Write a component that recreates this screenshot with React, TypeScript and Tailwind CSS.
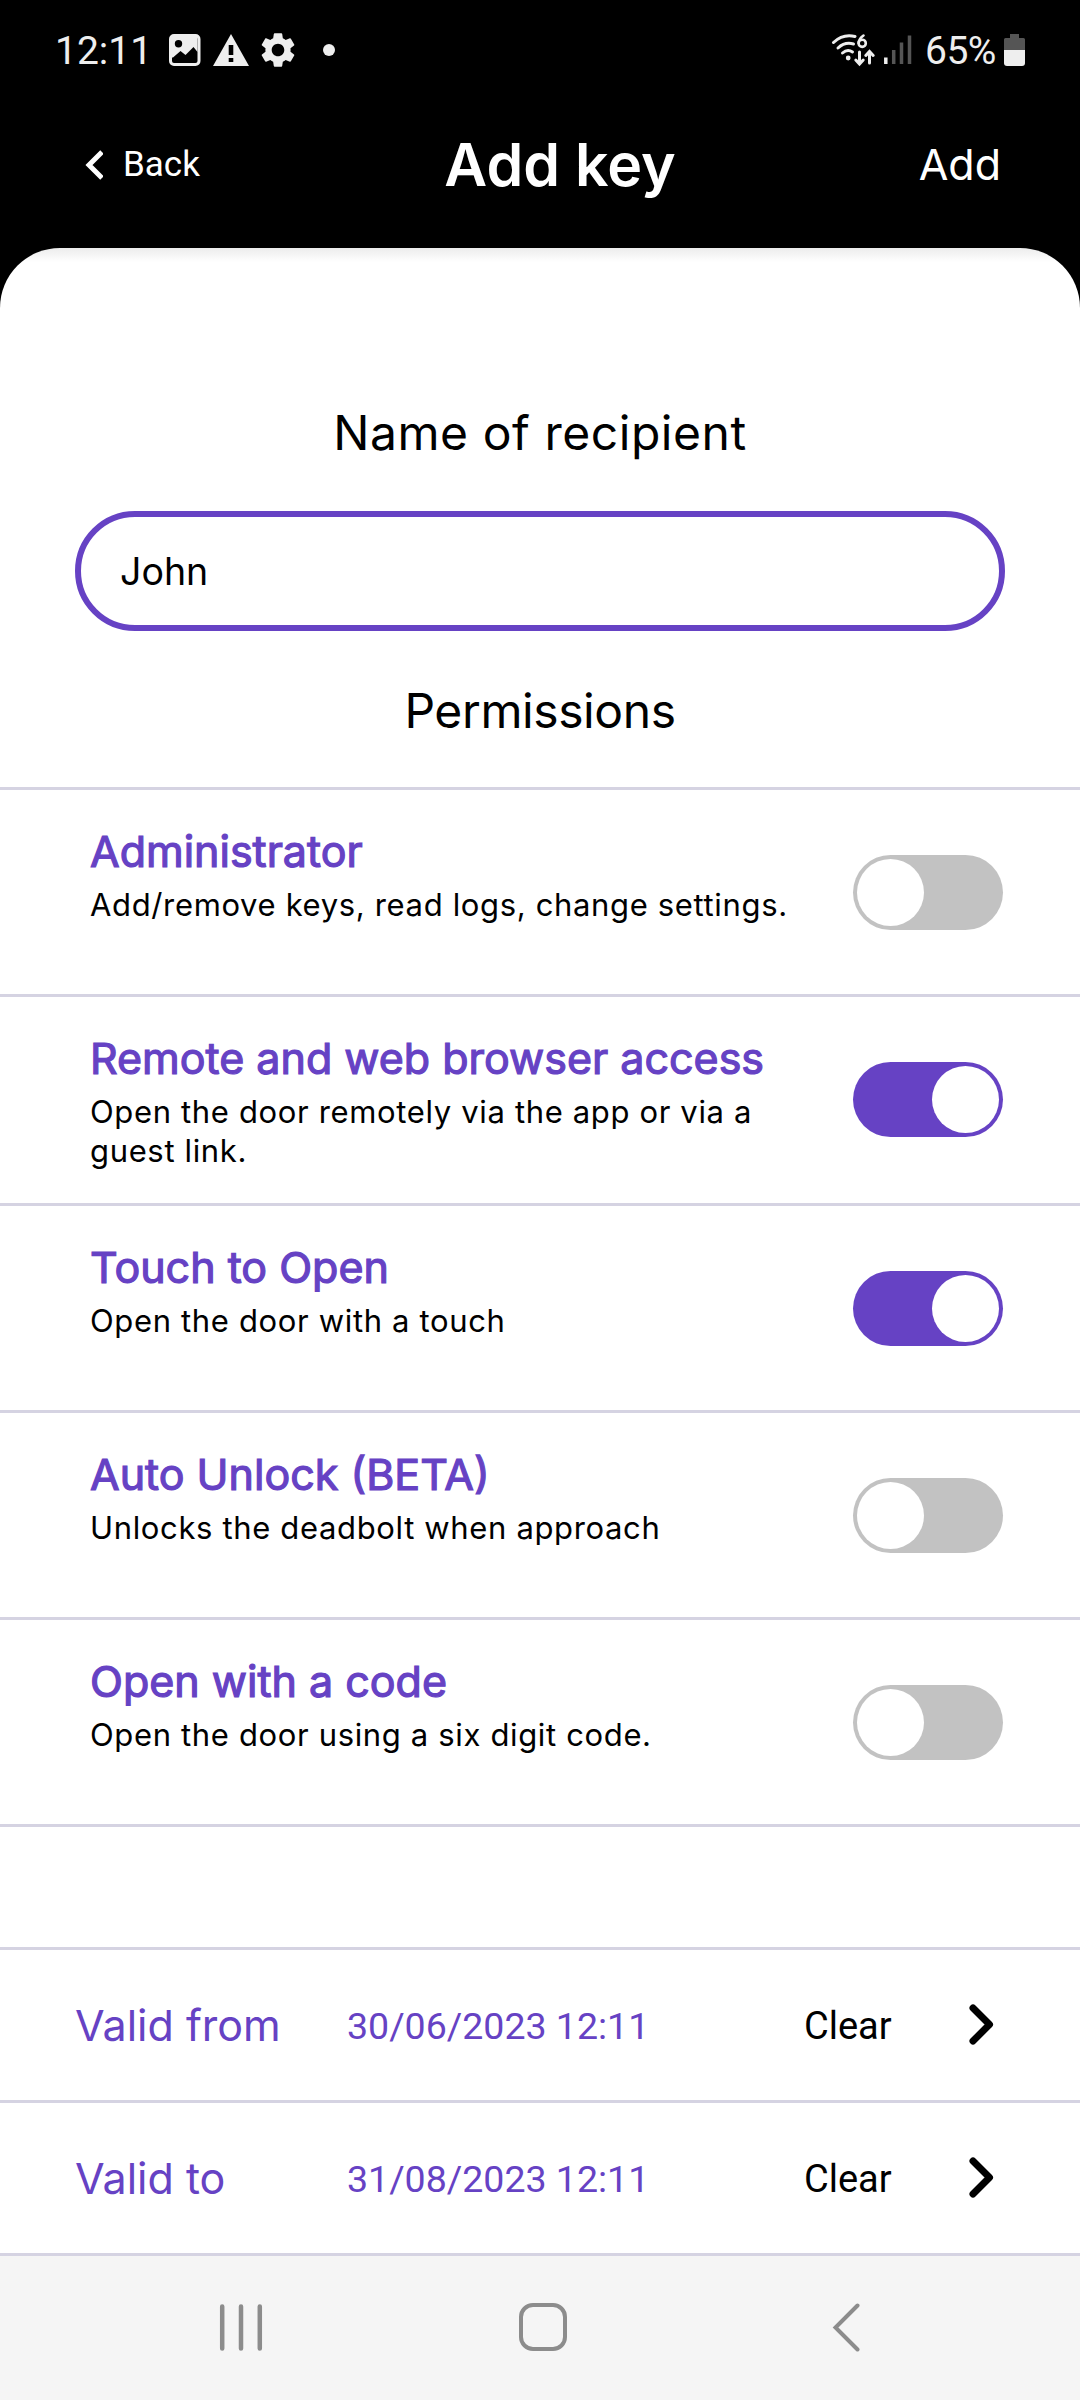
import React from 'react';

const inter = "font-['Inter',sans-serif]";
const roboto = "font-['Roboto',sans-serif]";

const permissions = [
  { title: 'Administrator', desc: 'Add/remove keys, read logs, change settings.', on: false, height: 'h-[207px]' },
  { title: 'Remote and web browser access', desc: 'Open the door remotely via the app or via a guest link.', on: true, height: 'h-[209px]' },
  { title: 'Touch to Open', desc: 'Open the door with a touch', on: true, height: 'h-[207px]' },
  { title: 'Auto Unlock (BETA)', desc: 'Unlocks the deadbolt when approach', on: false, height: 'h-[207px]' },
  { title: 'Open with a code', desc: 'Open the door using a six digit code.', on: false, height: 'h-[207px]' },
];

const validity = [
  { label: 'Valid from', value: '30/06/2023 12:11' },
  { label: 'Valid to', value: '31/08/2023 12:11' },
];

const StatusBar: React.FC = () => (
  <div className={`flex h-[100px] items-center justify-between pl-[55px] pr-[55px] text-[#eeeeee] ${roboto}`}>
    <div className="flex items-center">
      <span className="w-[114px] pt-[2px] text-[39px] leading-none">12:11</span>
      <svg width="32" height="32" viewBox="0 0 32 32" fill="none">
        <rect x="1.5" y="1.5" width="28.5" height="29" rx="3.5" stroke="currentColor" strokeWidth="3" />
        <path
          fillRule="evenodd"
          fill="currentColor"
          d="M3 1h25.500v17l-4-5-8 8-5-4-7.500 6.500H2V2zM9.500 6a3.700 3.700 0 1 0 0 7.400 3.700 3.700 0 0 0 0-7.400z"
        />
      </svg>
      <svg className="ml-[12px]" width="36" height="32" viewBox="0 0 36 32">
        <path fillRule="evenodd" fill="currentColor" d="M18 0L36 32H0zM15.700 11v10h4.600v-10zM15.700 24v4h4.600v-4z" />
      </svg>
      <svg className="ml-[8px]" width="42" height="42" viewBox="0 0 24 24" fill="currentColor">
        <path d="M19.140 12.940c.04-.3.060-.61.060-.94s-.02-.64-.07-.94l2.030-1.580a.49.49 0 0 0 .12-.61l-1.920-3.320a.488.488 0 0 0-.59-.22l-2.390.96c-.5-.38-1.030-.7-1.620-.94l-.36-2.540a.484.484 0 0 0-.48-.41h-3.840c-.24 0-.43.17-.47.41l-.36 2.540c-.59.24-1.130.57-1.620.94l-2.390-.96c-.22-.08-.47 0-.59.22L2.740 8.870c-.12.21-.08.47.12.61l2.030 1.580c-.05.3-.09.63-.09.94s.02.640.07.940l-2.030 1.580a.49.49 0 0 0-.12.610l1.920 3.320c.12.220.370.290.590.220l2.390-.96c.5.380 1.030.700 1.620.940l.36 2.540c.05.240.240.410.480.410h3.840c.24 0 .44-.17.470-.41l.36-2.540c.59-.24 1.130-.56 1.620-.94l2.390.96c.22.080.470 0 .590-.22l1.920-3.320c.12-.22.070-.47-.12-.61l-2.010-1.580zM12 15.600c-1.980 0-3.600-1.620-3.600-3.600s1.620-3.600 3.600-3.600 3.600 1.620 3.600 3.600-1.620 3.600-3.600 3.600z" />
      </svg>
      <span className="ml-[24px] size-3 rounded-full bg-[#eeeeee]" />
    </div>

    <div className="flex items-center">
      <svg width="82" height="34" viewBox="0 0 82 34" fill="none" stroke="currentColor" strokeLinecap="round">
        <g strokeWidth="3">
          <path d="M2.500 9.500Q12 .5 24 3.500" />
          <path d="M7 15Q14 8.500 22.500 11" />
          <path d="M11.500 20Q16.500 15.500 21.500 19" />
          <path d="M28.500 19v11M24.800 27l3.700 4 3.700-4M38.500 30v-11M34.800 22.500l3.700-4 3.700 4" />
        </g>
        <g strokeWidth="2.600">
          <circle cx="31.200" cy="10.300" r="3.600" />
          <path d="M32.500 2.500Q28 5.500 27.600 10" />
        </g>
        <circle cx="17.200" cy="25" r="2.400" fill="currentColor" stroke="none" />
        <g strokeWidth="3.500" strokeLinecap="butt">
          <path d="M54.800 24.500v6.500" />
          <path stroke="#555555" d="M62.700 17v14M70.500 9.500v21.500M78.500 2.500v28.500" />
        </g>
      </svg>
      <span className="ml-[12px] w-[79px] pt-[2px] text-[39px] leading-none tracking-[-0.5px]">65%</span>
      <svg width="21" height="32" viewBox="0 0 21 32">
        <path fill="#555555" d="M6 0h9v4h4.500a1.500 1.500 0 0 1 1.500 1.500V16H0V5.500A1.500 1.500 0 0 1 1.500 4H6z" />
        <path fill="currentColor" d="M0 16h21v13a3 3 0 0 1-3 3H3a3 3 0 0 1-3-3z" />
      </svg>
    </div>
  </div>
);

const Header: React.FC = () => (
  <header className="flex h-[148px] items-start justify-between pl-[85px] pr-[79px] text-white">
    <button className="flex w-[200px] items-center gap-[20px] pt-[44px]">
      <svg width="18" height="30" viewBox="0 0 18 30" fill="none" stroke="currentColor" strokeWidth="5">
        <path d="M17 2L4 15l13 13" />
      </svg>
      <span className={`pt-px text-[35px] leading-[40px] ${roboto}`}>Back</span>
    </button>
    <h1 className={`pt-[30px] pl-[34px] text-[59px] leading-[70px] font-semibold whitespace-nowrap ${inter}`}>Add key</h1>
    <button className={`w-[200px] pt-[38px] text-right text-[43px] leading-[52px] ${inter}`}>Add</button>
  </header>
);

const Toggle: React.FC<{ on: boolean }> = ({ on }) => (
  <div
    role="switch"
    aria-checked={on}
    className={`flex h-[75px] w-[150px] shrink-0 items-center rounded-full px-1 ${on ? 'justify-end bg-[#6642c4]' : 'justify-start bg-[#c2c2c2]'}`}
  >
    <div className="size-[67px] rounded-full bg-white" />
  </div>
);

const NavBar: React.FC = () => (
  <nav className="flex h-[144px] items-start justify-between bg-[#f5f5f5] pt-[46px] pr-[219px] pl-[219px] text-[#8c8c8c]">
    <svg width="44" height="50" viewBox="0 0 44 50" stroke="currentColor" strokeWidth="4.500" strokeLinecap="round">
      <path d="M3.200 4.500v42M22 4.500v42M40.800 4.500v42" />
    </svg>
    <div className="mt-px mr-[8px] size-[48px] rounded-[14px] border-4 border-[#8c8c8c]" />
    <svg width="30" height="50" viewBox="0 0 30 50" fill="none" stroke="currentColor" strokeWidth="4" strokeLinecap="round">
      <path d="M26.500 3.500L4.500 25.500l22 22" />
    </svg>
  </nav>
);

const App: React.FC = () => {
  return (
    <div className="h-[2400px] w-[1080px] overflow-hidden bg-black">
      <StatusBar />
      <Header />

      <main className={`h-[2008px] rounded-t-[60px] bg-white bg-linear-to-b from-[#ececec] to-white bg-[length:100%_14px] bg-no-repeat text-black ${inter}`}>
        <div className="flex h-[539px] flex-col items-center pt-[155px]">
          <label className="text-[48px] leading-[60px] tracking-[0.55px]">Name of recipient</label>
          <div className="mt-[48px] flex h-[120px] w-[930px] items-center rounded-full border-[6px] border-[#6642c4] pt-[2px] pl-[39px] text-[37.500px]">
            John
          </div>
          <h2 className="mt-[50px] text-[48px] leading-[60px] tracking-[-0.4px]">Permissions</h2>
        </div>

        {permissions.map((item) => (
          <section key={item.title} className={`flex items-start justify-between border-t-3 border-[#d5d3e2] pr-[77px] pl-[90px] ${item.height}`}>
            <div className="w-[720px] pt-[35px]">
              <h3 className="text-[43px] leading-[52px] text-[#6642c4] [-webkit-text-stroke:1.2px_#6642c4]">{item.title}</h3>
              <p className="pt-[8px] text-[31px] leading-[39px] tracking-[0.65px]">{item.desc}</p>
            </div>
            <div className="pt-[65px]">
              <Toggle on={item.on} />
            </div>
          </section>
        ))}

        <div className="h-[123px] border-t-3 border-[#d5d3e2]" />

        {validity.map((item) => (
          <section key={item.label} className="flex h-[153px] items-center border-t-3 border-[#d5d3e2] pr-[86px] pl-[75px] text-[#6642c4]">
            <span className="w-[272px] text-[43px]">{item.label}</span>
            <span className={`w-[457px] pt-[3px] text-[37.500px] ${roboto}`}>{item.value}</span>
            <button className={`pt-[3px] text-[38px] text-black ${roboto}`}>Clear</button>
            <svg className="ml-auto text-black" width="26" height="42" viewBox="0 0 26 42" fill="none" stroke="currentColor" strokeWidth="7" strokeLinecap="round" strokeLinejoin="round">
              <path d="M5 4l16.500 16.500L5 37" />
            </svg>
          </section>
        ))}
        <div className="h-[3px] bg-[#d5d3e2]" />
      </main>

      <NavBar />
    </div>
  );
};

export default App;
